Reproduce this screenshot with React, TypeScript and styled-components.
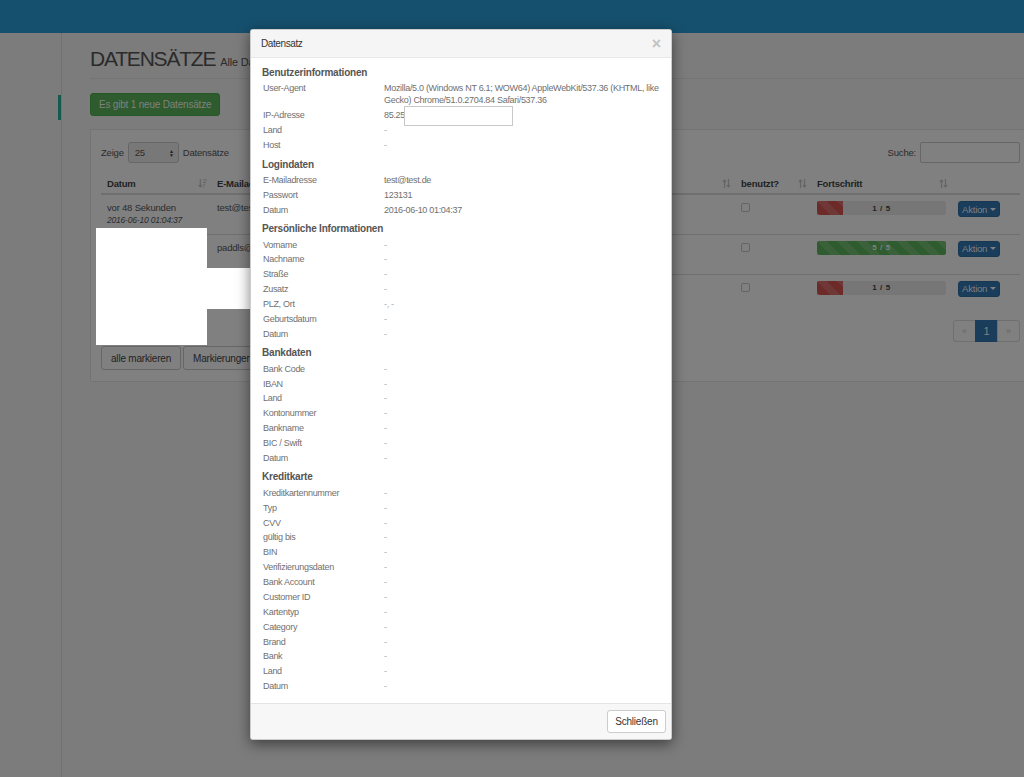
import React from 'react'
import styled, { createGlobalStyle } from 'styled-components'

const FONT = `"Liberation Sans", Arial, sans-serif`

// colours of the page as seen through the dialog's 50% black backdrop
const C = {
	pageBg: '#7c7c7c',
	topBar: '#15506e',
	sideLine: '#717171',
	accent: '#135c4d',
	line: '#737476',
	panel: '#808080',
	text: '#2b2b2b',
	head: '#222222',
	muted: '#646464',
	border: '#666666',
	rowLine: '#6f6f6f',
	inputBg: '#787878',
	barTrack: '#767676',
	red: '#6c2a28',
	green: '#2e5c2e',
	blue: '#1a3d5c',
	blueBorder: '#173752',
	greenBorder: '#265726',
	white: '#808080',
	pageText: '#4c4c4c',
}

const GlobalStyle = createGlobalStyle`
	html, body {
		margin: 0;
		padding: 0;
		background: ${C.pageBg};
	}
	body {
		font-family: ${FONT};
		font-size: 9.5px;
		letter-spacing: -0.2px;
		color: ${C.text};
	}
	* {
		box-sizing: border-box;
	}
`

const Page = styled.div`
	position: relative;
	width: 1024px;
	height: 777px;
	overflow: hidden;
	background: ${C.pageBg};
	display: flex;
	flex-direction: column;
`

const TopBar = styled.div`
	height: 33px;
	flex: none;
	background: ${C.topBar};
`

const Body = styled.div`
	flex: 1;
	display: flex;
`

const Sidebar = styled.div`
	width: 62px;
	flex: none;
	border-right: 1px solid ${C.sideLine};
	padding-top: 62px;
`

const ActiveMark = styled.div`
	margin-left: 58px;
	width: 3px;
	height: 25px;
	background: ${C.accent};
`

const Main = styled.div`
	flex: none;
	width: 990px;
	padding: 12px 20px 0 28px;
`

const PageHeader = styled.div`
	display: flex;
	align-items: baseline;
	gap: 5px;
	padding-bottom: 5px;
	border-bottom: 1px solid ${C.line};
`

const Title = styled.h3`
	margin: 0;
	font-size: 21px;
	letter-spacing: -1.2px;
	line-height: 28px;
	font-weight: 400;
	color: ${C.text};
`

const Subtitle = styled.small`
	font-size: 11px;
	color: ${C.text};
`

type Variant = 'success' | 'default' | 'primary'

const palette: Record<Variant, { bg: string; border: string; text: string }> = {
	success: { bg: C.green, border: C.greenBorder, text: C.white },
	primary: { bg: C.blue, border: C.blueBorder, text: C.white },
	default: { bg: C.panel, border: C.border, text: C.head },
}

const PageButton = styled.button<{ $variant?: Variant }>`
	font-family: ${FONT};
	letter-spacing: -0.2px;
	font-size: 10px;
	border-radius: 3px;
	border: 1px solid ${(p) => palette[p.$variant || 'default'].border};
	background: ${(p) => palette[p.$variant || 'default'].bg};
	color: ${(p) => palette[p.$variant || 'default'].text};
`

const NewButton = styled(PageButton)`
	margin-top: 14px;
	height: 23px;
	padding: 0 8px;
`

const Panel = styled.div`
	margin-top: 13px;
	width: 941px;
	background: ${C.panel};
	border: 1px solid ${C.line};
	padding: 12px 10px 11px;
`

const Controls = styled.div`
	display: flex;
	align-items: center;
	justify-content: space-between;
	height: 21px;
`

const LengthGroup = styled.label`
	display: flex;
	align-items: center;
	gap: 4px;
`

const FakeSelect = styled.div`
	width: 51px;
	height: 21px;
	border: 1px solid ${C.border};
	border-radius: 3px;
	background: ${C.inputBg};
	display: flex;
	align-items: center;
	justify-content: space-between;
	padding: 0 4px 0 6px;
`

const SelectArrows = styled.span`
	font-size: 5px;
	line-height: 4px;
	display: flex;
	flex-direction: column;
	color: ${C.head};
`

const SearchGroup = styled.label`
	display: flex;
	align-items: center;
	gap: 4px;
`

const SearchInput = styled.div`
	width: 100px;
	height: 21px;
	border: 1px solid ${C.border};
	border-radius: 2px;
	background: ${C.panel};
`

const Table = styled.table`
	margin-top: 10px;
	width: 919px;
	border-collapse: collapse;
	table-layout: fixed;
`

const Th = styled.th<{ $w: number }>`
	width: ${(p) => p.$w}px;
	height: 21px;
	text-align: left;
	font-weight: 700;
	padding: 0 6px;
	border-bottom: 2px solid ${C.rowLine};
	color: ${C.head};
	position: relative;
`

const SortIcon = styled.span`
	position: absolute;
	right: 4px;
	top: 6px;
	display: flex;
	color: ${C.muted};
`

const Td = styled.td`
	height: 40px;
	vertical-align: top;
	padding: 7px 6px 0;
	border-top: 1px solid ${C.rowLine};
	white-space: nowrap;
	overflow: hidden;
`

const DateSub = styled.div`
	font-style: italic;
	font-size: 8.5px;
	margin-top: 2px;
`

const Check = styled.span`
	display: inline-block;
	width: 9px;
	height: 9px;
	margin-top: 1px;
	border: 1px solid ${C.muted};
	border-radius: 2px;
	background: ${C.panel};
`

const Progress = styled.div`
	position: relative;
	width: 129px;
	height: 14px;
	margin-top: -1px;
	border-radius: 2px;
	background: ${C.barTrack};
	overflow: hidden;
`

const Bar = styled.div<{ $color: string }>`
	height: 100%;
	background-color: ${(p) => p.$color};
	background-image: linear-gradient(
		45deg,
		rgba(128, 128, 128, 0.15) 25%,
		transparent 25%,
		transparent 50%,
		rgba(128, 128, 128, 0.15) 50%,
		rgba(128, 128, 128, 0.15) 75%,
		transparent 75%,
		transparent
	);
	background-size: 20px 20px;
`

const BarLabel = styled.span<{ $light?: boolean }>`
	position: absolute;
	top: 0;
	left: 0;
	width: 100%;
	height: 100%;
	display: flex;
	align-items: center;
	justify-content: center;
	font-size: 8px;
	font-weight: 700;
	letter-spacing: 0.6px;
	color: ${(p) => (p.$light ? C.white : C.head)};
`

const ActionButton = styled(PageButton)`
	height: 16px;
	margin-top: -1px;
	padding: 0 3px;
	font-size: 9.5px;
	display: inline-flex;
	align-items: center;
	gap: 3px;
`

const Caret = styled.span`
	width: 0;
	height: 0;
	border-left: 3px solid transparent;
	border-right: 3px solid transparent;
	border-top: 3px solid ${C.white};
`

const Pager = styled.div`
	margin-top: 6px;
	display: flex;
	justify-content: flex-end;
`

const PageLink = styled.span<{ $active?: boolean }>`
	width: 23px;
	height: 22px;
	display: flex;
	align-items: center;
	justify-content: center;
	font-size: ${(p) => (p.$active ? '11px' : '9px')};
	border: 1px solid ${(p) => (p.$active ? C.blue : C.rowLine)};
	margin-left: -1px;
	background: ${(p) => (p.$active ? C.blue : C.panel)};
	color: ${(p) => (p.$active ? C.white : C.muted)};
	&:first-child {
		border-radius: 3px 0 0 3px;
	}
	&:last-child {
		border-radius: 0 3px 3px 0;
	}
`

const BulkBar = styled.div`
	margin-top: 4px;
	display: flex;
	gap: 2px;
`

const BulkButton = styled(PageButton)`
	height: 24px;
	padding: 0 9px;
`

const ModalLayer = styled.div`
	position: absolute;
	top: 0;
	left: 0;
	width: 100%;
	height: 100%;
	z-index: 30;
	padding: 29px 0 0 250px;
`

const Redaction = styled.div<{ $x: number; $y: number; $w: number; $h: number }>`
	position: absolute;
	left: ${(p) => p.$x}px;
	top: ${(p) => p.$y}px;
	width: ${(p) => p.$w}px;
	height: ${(p) => p.$h}px;
	background: #fff;
`

const Modal = styled.div`
	position: relative;
	z-index: 1;
	width: 422px;
	background: #fff;
	border: 1px solid rgba(0, 0, 0, 0.2);
	border-radius: 3px;
	box-shadow: 0 4px 14px rgba(0, 0, 0, 0.5);
	overflow: hidden;
	color: #666;
	letter-spacing: -0.2px;
`

const ModalHeader = styled.div`
	height: 28px;
	display: flex;
	align-items: center;
	justify-content: space-between;
	padding: 0 10px;
	background: #f5f5f5;
	border-bottom: 1px solid #e8e8e8;
`

const ModalTitle = styled.span`
	font-size: 10px;
	letter-spacing: -0.4px;
	color: #333;
`

const Close = styled.span`
	font-size: 16px;
	line-height: 1;
	color: #c2c2c2;
	font-weight: 700;
`

const ModalBody = styled.div`
	padding: 3px 11px 9px;
`

const SectionTitle = styled.div`
	padding-top: 4px;
	line-height: 16px;
	font-size: 10px;
	font-weight: 700;
	color: #555;
`

const Row = styled.div`
	display: grid;
	grid-template-columns: 121px 1fr;
	padding: 1.45px 0 1.45px 1px;
	line-height: 12px;
	font-size: 9px;
	letter-spacing: -0.3px;
`

const Label = styled.span`
	color: #707070;
`

const Value = styled.span<{ $muted?: boolean }>`
	position: relative;
	color: ${(p) => (p.$muted ? '#aaa' : '#707070')};
`

const IpBlank = styled.span`
	position: absolute;
	left: 20px;
	top: -3px;
	width: 109px;
	height: 20px;
	background: #fff;
	border: 1px solid #c8c8c8;
`

const ModalFooter = styled.div`
	display: flex;
	justify-content: flex-end;
	padding: 6px 5px;
	background: #f7f7f7;
	border-top: 1px solid #e5e5e5;
`

const CloseButton = styled.button`
	height: 23px;
	width: 59px;
	padding: 0;
	font-family: ${FONT};
	font-size: 10px;
	letter-spacing: -0.2px;
	color: #333;
	background: #fff;
	border: 1px solid #ccc;
	border-radius: 3px;
`

const SortBoth = () => (
	<svg width="9" height="9" viewBox="0 0 9 9">
		<path d="M2.5 9V1.2M0.8 2.8L2.5 1 4.2 2.8" stroke="currentColor" strokeWidth="1.2" fill="none" />
		<path d="M6.5 0v7.8M4.8 6.2L6.5 8 8.2 6.2" stroke="currentColor" strokeWidth="1.2" fill="none" />
	</svg>
)

const SortDesc = () => (
	<svg width="9" height="9" viewBox="0 0 9 9">
		<path d="M2.3 0v7.8M0.6 6.2L2.3 8 4 6.2" stroke="currentColor" strokeWidth="1.2" fill="none" />
		<path d="M5 1h4M5 3.5h3M5 6h2M5 8.3h1" stroke="currentColor" strokeWidth="1.1" />
	</svg>
)

type Field = [string, string]

const sections: { title: string; fields: Field[] }[] = [
	{
		title: 'Benutzerinformationen',
		fields: [
			[
				'User-Agent',
				'Mozilla/5.0 (Windows NT 6.1; WOW64) AppleWebKit/537.36 (KHTML, like Gecko) Chrome/51.0.2704.84 Safari/537.36',
			],
			['IP-Adresse', '85.25'],
			['Land', '-'],
			['Host', '-'],
		],
	},
	{
		title: 'Logindaten',
		fields: [
			['E-Mailadresse', 'test@test.de'],
			['Passwort', '123131'],
			['Datum', '2016-06-10 01:04:37'],
		],
	},
	{
		title: 'Persönliche Informationen',
		fields: [
			['Vorname', '-'],
			['Nachname', '-'],
			['Straße', '-'],
			['Zusatz', '-'],
			['PLZ, Ort', '-, -'],
			['Geburtsdatum', '-'],
			['Datum', '-'],
		],
	},
	{
		title: 'Bankdaten',
		fields: [
			['Bank Code', '-'],
			['IBAN', '-'],
			['Land', '-'],
			['Kontonummer', '-'],
			['Bankname', '-'],
			['BIC / Swift', '-'],
			['Datum', '-'],
		],
	},
	{
		title: 'Kreditkarte',
		fields: [
			['Kreditkartennummer', '-'],
			['Typ', '-'],
			['CVV', '-'],
			['gültig bis', '-'],
			['BIN', '-'],
			['Verifizierungsdaten', '-'],
			['Bank Account', '-'],
			['Customer ID', '-'],
			['Kartentyp', '-'],
			['Category', '-'],
			['Brand', '-'],
			['Bank', '-'],
			['Land', '-'],
			['Datum', '-'],
		],
	},
]

const records = [
	{ ago: 'vor 48 Sekunden', date: '2016-06-10 01:04:37', mail: 'test@test.de', pass: '123131', ip: '85.25.0.0', step: 1 },
	{ ago: 'vor 3 Minuten', date: '2016-06-10 01:02:11', mail: 'paddls@web.de', pass: 'geheim', ip: '85.25.0.0', step: 5 },
	{ ago: 'vor 5 Minuten', date: '2016-06-10 01:00:02', mail: 'info@mail.de', pass: 'passwort', ip: '85.25.0.0', step: 1 },
]

const columns: [string, number, 'desc' | 'both' | null][] = [
	['Datum', 110, 'desc'],
	['E-Mailadresse', 180, 'both'],
	['Passwort', 170, 'both'],
	['IP-Adresse', 174, 'both'],
	['benutzt?', 76, 'both'],
	['Fortschritt', 141, 'both'],
	['', 68, null],
]

const App: React.FC = () => {
	return (
		<Page>
			<GlobalStyle />
			<TopBar />
			<Body>
				<Sidebar>
					<ActiveMark />
				</Sidebar>
				<Main>
					<PageHeader>
						<Title>DATENSÄTZE</Title>
						<Subtitle>Alle Datensätze</Subtitle>
					</PageHeader>
					<NewButton $variant="success">Es gibt 1 neue Datensätze</NewButton>
					<Panel>
						<Controls>
							<LengthGroup>
								Zeige
								<FakeSelect>
									25
									<SelectArrows>
										<span>▲</span>
										<span>▼</span>
									</SelectArrows>
								</FakeSelect>
								Datensätze
							</LengthGroup>
							<SearchGroup>
								Suche:
								<SearchInput />
							</SearchGroup>
						</Controls>
						<Table>
							<thead>
								<tr>
									{columns.map(([name, w, sort], i) => (
										<Th key={i} $w={w}>
											{name}
											{sort && <SortIcon>{sort === 'desc' ? <SortDesc /> : <SortBoth />}</SortIcon>}
										</Th>
									))}
								</tr>
							</thead>
							<tbody>
								{records.map((r, i) => (
									<tr key={i}>
										<Td>
											{r.ago}
											<DateSub>{r.date}</DateSub>
										</Td>
										<Td>{r.mail}</Td>
										<Td>{r.pass}</Td>
										<Td>{r.ip}</Td>
										<Td>
											<Check />
										</Td>
										<Td>
											<Progress>
												<Bar
													$color={r.step === 5 ? C.green : C.red}
													style={{ width: `${(r.step / 5) * 100}%` }}
												/>
												<BarLabel $light={r.step === 5}>
													{r.step} / 5
												</BarLabel>
											</Progress>
										</Td>
										<Td>
											<ActionButton $variant="primary">
												Aktion <Caret />
											</ActionButton>
										</Td>
									</tr>
								))}
							</tbody>
						</Table>
						<Pager>
							<PageLink>«</PageLink>
							<PageLink $active>1</PageLink>
							<PageLink>»</PageLink>
						</Pager>
						<BulkBar>
							<BulkButton>alle markieren</BulkButton>
							<BulkButton>Markierungen aufheben</BulkButton>
						</BulkBar>
					</Panel>
				</Main>
			</Body>

			<ModalLayer>
				<Redaction $x={96} $y={228} $w={111} $h={117} />
				<Redaction $x={207} $y={268} $w={50} $h={41} />
				<Modal>
					<ModalHeader>
						<ModalTitle>Datensatz</ModalTitle>
						<Close>×</Close>
					</ModalHeader>
					<ModalBody>
						{sections.map((s) => (
							<React.Fragment key={s.title}>
								<SectionTitle>{s.title}</SectionTitle>
								{s.fields.map(([label, value], i) => (
									<Row key={label + i}>
										<Label>{label}</Label>
										<Value $muted={value.startsWith('-')}>
											{value}
											{label === 'IP-Adresse' && <IpBlank />}
										</Value>
									</Row>
								))}
							</React.Fragment>
						))}
					</ModalBody>
					<ModalFooter>
						<CloseButton>Schließen</CloseButton>
					</ModalFooter>
				</Modal>
			</ModalLayer>
		</Page>
	)
}

export default App
